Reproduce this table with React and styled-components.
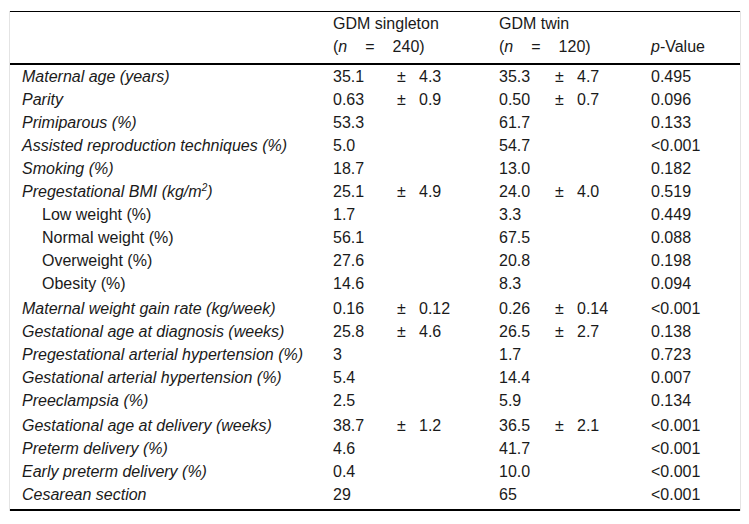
import React from 'react';
import styled, { createGlobalStyle } from 'styled-components';

const Global = createGlobalStyle`
	html, body {
		margin: 0;
		padding: 0;
		background: #fff;
	}
	body {
		font-family: "Liberation Sans", Arial, sans-serif;
		color: #1a1a1a;
	}
`;

const Page = styled.div`
	padding: 11px 8px 0 9px;
`;

const Frame = styled.div`
	border-left: 1px solid #e4e4e4;
	border-right: 1px solid #e4e4e4;
`;

const Table = styled.table`
	width: 100%;
	border-collapse: collapse;
	font-size: 16px;
	border-top: 1px solid #000;
	border-bottom: 2px solid #000;
	table-layout: fixed;
`;

const Head = styled.thead`
	tr {
		border-bottom: 2px solid #000;
	}
`;

const HeadCell = styled.th`
	text-align: left;
	font-weight: normal;
	vertical-align: bottom;
	padding: 0 0 5px;
	line-height: 23px;
`;

const Eq = styled.span`
	display: inline-block;
	margin: 0 ${(p) => p.$gap}px;
`;

const Row = styled.tr`
	td {
		padding-top: ${(p) => (p.$gapTop ? 2 : 0)}px;
		padding-bottom: ${(p) => (p.$last ? 3 : 0)}px;
	}
`;

const Label = styled.td`
	line-height: 23px;
	padding-left: ${(p) => (p.$sub ? 32 : 12)}px;
	padding-right: 0;
	font-style: ${(p) => (p.$sub ? 'normal' : 'italic')};
	white-space: nowrap;
`;

const Cell = styled.td`
	line-height: 23px;
	padding-left: 0;
	padding-right: 0;
	white-space: nowrap;
`;

const Stat = styled.div`
	display: flex;
	align-items: baseline;
`;

const Mean = styled.span`
	width: ${(p) => p.$w}px;
`;

const Pm = styled.span`
	width: 22px;
`;

const Sup = styled.sup`
	font-size: 10px;
	line-height: 0;
`;

const rows = [
	{ label: 'Maternal age (years)', a: ['35.1', '4.3'], b: ['35.3', '4.7'], p: '0.495' },
	{ label: 'Parity', a: ['0.63', '0.9'], b: ['0.50', '0.7'], p: '0.096' },
	{ label: 'Primiparous (%)', a: ['53.3'], b: ['61.7'], p: '0.133' },
	{ label: 'Assisted reproduction techniques (%)', a: ['5.0'], b: ['54.7'], p: '<0.001' },
	{ label: 'Smoking (%)', a: ['18.7'], b: ['13.0'], p: '0.182' },
	{ label: 'bmi', a: ['25.1', '4.9'], b: ['24.0', '4.0'], p: '0.519' },
	{ label: 'Low weight (%)', sub: true, a: ['1.7'], b: ['3.3'], p: '0.449' },
	{ label: 'Normal weight (%)', sub: true, a: ['56.1'], b: ['67.5'], p: '0.088' },
	{ label: 'Overweight (%)', sub: true, a: ['27.6'], b: ['20.8'], p: '0.198' },
	{ label: 'Obesity (%)', sub: true, a: ['14.6'], b: ['8.3'], p: '0.094' },
	{ label: 'Maternal weight gain rate (kg/week)', gap: true, a: ['0.16', '0.12'], b: ['0.26', '0.14'], p: '<0.001' },
	{ label: 'Gestational age at diagnosis (weeks)', a: ['25.8', '4.6'], b: ['26.5', '2.7'], p: '0.138' },
	{ label: 'Pregestational arterial hypertension (%)', a: ['3'], b: ['1.7'], p: '0.723' },
	{ label: 'Gestational arterial hypertension (%)', a: ['5.4'], b: ['14.4'], p: '0.007' },
	{ label: 'Preeclampsia (%)', a: ['2.5'], b: ['5.9'], p: '0.134' },
	{ label: 'Gestational age at delivery (weeks)', gap: true, a: ['38.7', '1.2'], b: ['36.5', '2.1'], p: '<0.001' },
	{ label: 'Preterm delivery (%)', a: ['4.6'], b: ['41.7'], p: '<0.001' },
	{ label: 'Early preterm delivery (%)', a: ['0.4'], b: ['10.0'], p: '<0.001' },
	{ label: 'Cesarean section', a: ['29'], b: ['65'], p: '<0.001', last: true },
];

const StatCell = ({ v, w }) => (
	<Cell>
		{v.length > 1 ? (
			<Stat>
				<Mean $w={w}>{v[0]}</Mean>
				<Pm>±</Pm>
				<span>{v[1]}</span>
			</Stat>
		) : (
			v[0]
		)}
	</Cell>
);

const App = () => (
	<Page>
		<Global />
		<Frame>
			<Table>
				<colgroup>
					<col style={{ width: 323 }} />
					<col style={{ width: 166 }} />
					<col style={{ width: 152 }} />
					<col />
				</colgroup>
				<Head>
					<tr>
						<HeadCell />
						<HeadCell>
							GDM singleton
							<br />
							(<i>n</i>
							<Eq $gap={18}>=</Eq>
							240)
						</HeadCell>
						<HeadCell>
							GDM twin
							<br />
							(<i>n</i>
							<Eq $gap={18}>=</Eq>
							120)
						</HeadCell>
						<HeadCell>
							<i>p</i>-Value
						</HeadCell>
					</tr>
				</Head>
				<tbody>
					{rows.map((r) => (
						<Row key={r.label} $gapTop={r.gap} $last={r.last}>
							<Label $sub={r.sub}>
								{r.label === 'bmi' ? (
									<>
										Pregestational BMI (kg/m<Sup>2</Sup>)
									</>
								) : (
									r.label
								)}
							</Label>
							<StatCell v={r.a} w={64} />
							<StatCell v={r.b} w={56} />
							<Cell>{r.p}</Cell>
						</Row>
					))}
				</tbody>
			</Table>
		</Frame>
	</Page>
);

export default App;
